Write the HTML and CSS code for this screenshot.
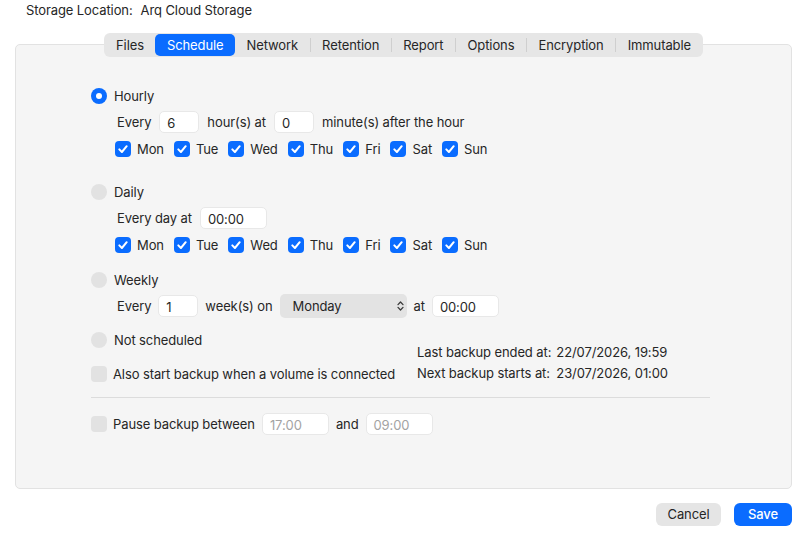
FILE: index.html
```html
<!DOCTYPE html>
<html>
<head>
<meta charset="utf-8">
<link rel="stylesheet" href="styles.css">
</head>
<body>
<div class="header"><span>Storage Location:</span><span>Arq Cloud Storage</span></div>
<div class="frame">
  <div class="tabs-wrap">
    <div class="tabs">
      <div class="tab">Files</div>
      <div class="tab active">Schedule</div>
      <div class="tab">Network</div>
      <div class="sep"></div>
      <div class="tab">Retention</div>
      <div class="sep"></div>
      <div class="tab">Report</div>
      <div class="sep"></div>
      <div class="tab">Options</div>
      <div class="sep"></div>
      <div class="tab">Encryption</div>
      <div class="sep"></div>
      <div class="tab">Immutable</div>
    </div>
  </div>
  <div class="panel">
    <div class="row r-hourly"><span class="radio on"></span><span>Hourly</span></div>
    <div class="row sub r-every"><span>Every</span><span class="field w40">6</span><span>hour(s) at</span><span class="field w40">0</span><span>minute(s) after the hour</span></div>
    <div class="row sub days r-days">
      <label class="day"><span class="check on"><svg viewBox="0 0 16 16" width="16" height="16"><path d="M4.3 8.4 L6.9 11 L11.7 5.2" fill="none" stroke="#fff" stroke-width="2" stroke-linecap="round" stroke-linejoin="round"/></svg></span>Mon</label>
      <label class="day"><span class="check on"><svg viewBox="0 0 16 16" width="16" height="16"><path d="M4.3 8.4 L6.9 11 L11.7 5.2" fill="none" stroke="#fff" stroke-width="2" stroke-linecap="round" stroke-linejoin="round"/></svg></span>Tue</label>
      <label class="day"><span class="check on"><svg viewBox="0 0 16 16" width="16" height="16"><path d="M4.3 8.4 L6.9 11 L11.7 5.2" fill="none" stroke="#fff" stroke-width="2" stroke-linecap="round" stroke-linejoin="round"/></svg></span>Wed</label>
      <label class="day"><span class="check on"><svg viewBox="0 0 16 16" width="16" height="16"><path d="M4.3 8.4 L6.9 11 L11.7 5.2" fill="none" stroke="#fff" stroke-width="2" stroke-linecap="round" stroke-linejoin="round"/></svg></span>Thu</label>
      <label class="day"><span class="check on"><svg viewBox="0 0 16 16" width="16" height="16"><path d="M4.3 8.4 L6.9 11 L11.7 5.2" fill="none" stroke="#fff" stroke-width="2" stroke-linecap="round" stroke-linejoin="round"/></svg></span>Fri</label>
      <label class="day"><span class="check on"><svg viewBox="0 0 16 16" width="16" height="16"><path d="M4.3 8.4 L6.9 11 L11.7 5.2" fill="none" stroke="#fff" stroke-width="2" stroke-linecap="round" stroke-linejoin="round"/></svg></span>Sat</label>
      <label class="day"><span class="check on"><svg viewBox="0 0 16 16" width="16" height="16"><path d="M4.3 8.4 L6.9 11 L11.7 5.2" fill="none" stroke="#fff" stroke-width="2" stroke-linecap="round" stroke-linejoin="round"/></svg></span>Sun</label>
    </div>

    <div class="row r-daily"><span class="radio"></span><span>Daily</span></div>
    <div class="row sub r-every"><span>Every day at</span><span class="field w67">00:00</span></div>
    <div class="row sub days r-days">
      <label class="day"><span class="check on"><svg viewBox="0 0 16 16" width="16" height="16"><path d="M4.3 8.4 L6.9 11 L11.7 5.2" fill="none" stroke="#fff" stroke-width="2" stroke-linecap="round" stroke-linejoin="round"/></svg></span>Mon</label>
      <label class="day"><span class="check on"><svg viewBox="0 0 16 16" width="16" height="16"><path d="M4.3 8.4 L6.9 11 L11.7 5.2" fill="none" stroke="#fff" stroke-width="2" stroke-linecap="round" stroke-linejoin="round"/></svg></span>Tue</label>
      <label class="day"><span class="check on"><svg viewBox="0 0 16 16" width="16" height="16"><path d="M4.3 8.4 L6.9 11 L11.7 5.2" fill="none" stroke="#fff" stroke-width="2" stroke-linecap="round" stroke-linejoin="round"/></svg></span>Wed</label>
      <label class="day"><span class="check on"><svg viewBox="0 0 16 16" width="16" height="16"><path d="M4.3 8.4 L6.9 11 L11.7 5.2" fill="none" stroke="#fff" stroke-width="2" stroke-linecap="round" stroke-linejoin="round"/></svg></span>Thu</label>
      <label class="day"><span class="check on"><svg viewBox="0 0 16 16" width="16" height="16"><path d="M4.3 8.4 L6.9 11 L11.7 5.2" fill="none" stroke="#fff" stroke-width="2" stroke-linecap="round" stroke-linejoin="round"/></svg></span>Fri</label>
      <label class="day"><span class="check on"><svg viewBox="0 0 16 16" width="16" height="16"><path d="M4.3 8.4 L6.9 11 L11.7 5.2" fill="none" stroke="#fff" stroke-width="2" stroke-linecap="round" stroke-linejoin="round"/></svg></span>Sat</label>
      <label class="day"><span class="check on"><svg viewBox="0 0 16 16" width="16" height="16"><path d="M4.3 8.4 L6.9 11 L11.7 5.2" fill="none" stroke="#fff" stroke-width="2" stroke-linecap="round" stroke-linejoin="round"/></svg></span>Sun</label>
    </div>

    <div class="row r-weekly"><span class="radio"></span><span>Weekly</span></div>
    <div class="row sub r-weekrow"><span>Every</span><span class="field w40">1</span><span>week(s) on</span>
      <span class="select"><span>Monday</span><svg width="7" height="12" viewBox="0 0 7 12"><path d="M1 4.6 L3.5 2 L6 4.6 M1 7.4 L3.5 10 L6 7.4" fill="none" stroke="#3a3a3a" stroke-width="1.3" stroke-linecap="round" stroke-linejoin="round"/></svg></span>
      <span>at</span><span class="field w67">00:00</span></div>

    <div class="row r-none"><span class="radio"></span><span>Not scheduled</span></div>

    <div class="status-row">
      <div class="row also"><span class="check"></span><span>Also start backup when a volume is connected</span></div>
      <div class="status">
        <span>Last backup ended at:</span><span>22/07/2026, 19:59</span>
        <span>Next backup starts at:</span><span>23/07/2026, 01:00</span>
      </div>
    </div>

    <div class="divider"></div>

    <div class="row r-pause"><span class="check"></span><span>Pause backup between</span><span class="field w67 ph">17:00</span><span>and</span><span class="field w67 ph">09:00</span></div>
  </div>
  <div class="buttons">
    <div class="btn cancel">Cancel</div>
    <div class="btn save">Save</div>
  </div>
</div>
</body>
</html>
```
FILE: styles.css
```css
* { box-sizing: border-box; }
html, body { margin: 0; padding: 0; background: #ffffff; }
body {
  font-family: "Inter", "Liberation Sans", sans-serif;
  font-size: 13px;
  letter-spacing: -0.1px;
  color: #262626;
  width: 807px;
  height: 539px;
  overflow: hidden;
}
.header {
  display: flex;
  gap: 8px;
  padding-left: 26px;
  height: 20px;
  line-height: 20px;
}
.frame {
  margin-left: 15px;
  width: 777px;
  margin-top: 13px;
}
.tabs-wrap {
  display: flex;
  justify-content: center;
  margin-bottom: -13px;
  position: relative;
  z-index: 1;
}
.tabs {
  display: flex;
  align-items: center;
  height: 24px;
  background: #e6e6e6;
  border-radius: 6px;
  padding: 0 1px;
}
.tab {
  padding: 0 11.5px;
  height: 22px;
  line-height: 22px;
  border-radius: 5px;
  color: #262626;
}
.tab.active {
  background: #0a6cff;
  color: #ffffff;
}
.sep {
  width: 1px;
  height: 14px;
  background: #cfcfcf;
}
.panel {
  height: 445px;
  background: #f5f5f5;
  border: 1px solid #e2e2e2;
  border-radius: 5px;
  padding: 41px 0 0 75px;
}
.row {
  display: flex;
  align-items: center;
  height: 20px;
  gap: 7px;
  white-space: nowrap;
}
.row.sub { margin-left: 24px; }
.r-every { height: 22px; margin-top: 5px; gap: 8px; padding-left: 2px; }
.r-days { margin-top: 6px; gap: 10px; }
.r-daily { margin-top: 23px; }
.r-weekly { margin-top: 15px; }
.r-weekrow { height: 24px; margin-top: 4px; gap: 7px; padding-left: 2px; }
.r-none { margin-top: 12px; }
.day { display: flex; align-items: center; gap: 6px; }
.radio {
  width: 16px;
  height: 16px;
  border-radius: 50%;
  background: #e2e2e2;
  flex: none;
  display: flex;
  align-items: center;
  justify-content: center;
}
.radio.on { background: #0a6cff; }
.radio.on::after {
  content: "";
  width: 6px;
  height: 6px;
  border-radius: 50%;
  background: #ffffff;
}
.check {
  width: 16px;
  height: 16px;
  border-radius: 4px;
  background: #e2e2e2;
  flex: none;
  display: flex;
}
.check.on { background: #0a6cff; }
.field {
  height: 22px;
  line-height: 22px;
  background: #ffffff;
  border: 1px solid #e8e8e8;
  border-radius: 5px;
  padding-left: 7px;
  color: #262626;
}
.field.ph { color: #a3a3a3; }
.w40 { width: 40px; }
.w67 { width: 67px; }
.select {
  width: 127px;
  height: 24px;
  background: #e3e3e3;
  border-radius: 5px;
  display: flex;
  align-items: center;
  justify-content: space-between;
  padding: 0 3px 0 13px;
}
.status-row {
  display: flex;
  margin-top: -7px;
}
.also {
  width: 326px;
  margin-top: 21px;
  gap: 6px;
}
.status {
  display: grid;
  grid-template-columns: auto auto;
  column-gap: 5px;
  line-height: 19px;
}
.divider {
  width: 619px;
  height: 1px;
  background: #dcdcdc;
  margin-top: 13px;
}
.r-pause { height: 22px; margin-top: 15px; gap: 7px; }
.r-pause .check { margin-right: -1px; }
.buttons {
  display: flex;
  justify-content: flex-end;
  gap: 13px;
  margin-top: 14px;
}
.btn {
  height: 23px;
  line-height: 23px;
  border-radius: 6px;
  text-align: center;
}
.cancel { width: 65px; background: #e5e5e5; color: #262626; }
.save { width: 58px; background: #0a6cff; color: #ffffff; font-weight: 500; }
```
